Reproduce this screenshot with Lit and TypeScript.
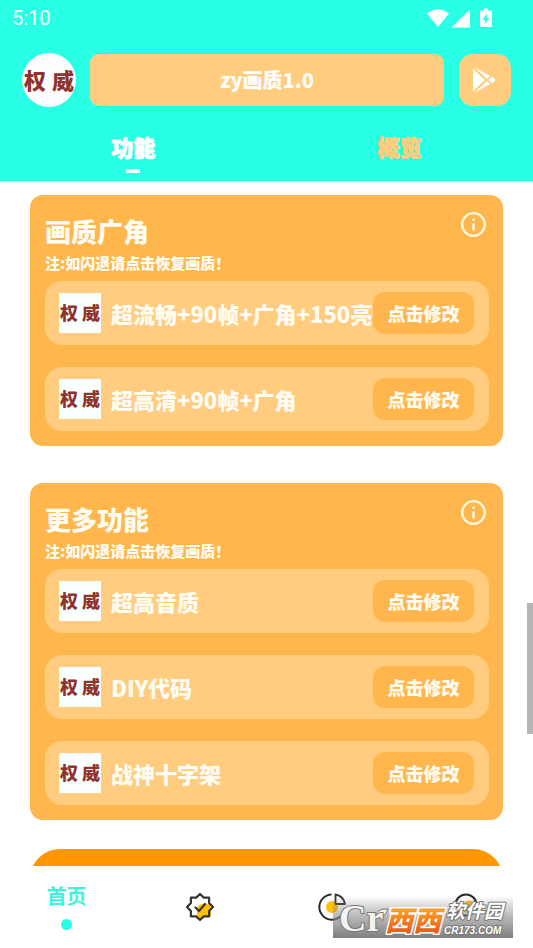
import { LitElement, html, css, svg } from "lit";
import { customElement, property } from "lit/decorators.js";

const FONT = css`"Noto Sans CJK SC", "Noto Sans", sans-serif`;

interface Section {
  title: string;
  items: string[];
}

const NOTE = "注:如闪退请点击恢复画质！";

const SECTIONS: Section[] = [
  { title: "画质广角", items: ["超流畅+90帧+广角+150亮", "超高清+90帧+广角"] },
  { title: "更多功能", items: ["超高音质", "DIY代码", "战神十字架"] },
];

@customElement("feature-card")
class FeatureCard extends LitElement {
  @property() heading = "";
  @property({ attribute: false }) items: string[] = [];

  static styles = css`
    :host {
      display: block;
      font-family: ${FONT};
      font-weight: 900;
      color: #fffdf4;
    }
    .card {
      background: #ffb74d;
      border-radius: 13px;
      padding: 15px 14px 15px 15px;
    }
    .head {
      display: flex;
      justify-content: space-between;
      align-items: flex-start;
      height: 71px;
    }
    .title {
      margin: 7px 0 0;
      font-size: 26px;
      line-height: 28px;
      font-weight: 900;
    }
    .note {
      margin: 7px 0 0;
      font-size: 15px;
      line-height: 22px;
      white-space: nowrap;
    }
    .info {
      border: 0;
      padding: 0;
      background: none;
      width: 30px;
      height: 30px;
      color: #fff9df;
      cursor: pointer;
    }
    .info svg {
      display: block;
    }
    .list {
      list-style: none;
      margin: 0;
      padding: 0;
      display: grid;
      gap: 22px;
    }
    .row {
      display: flex;
      align-items: center;
      height: 64px;
      box-sizing: border-box;
      padding: 0 15px 0 14px;
      border-radius: 17px;
      background: #ffcc80;
    }
    .thumb {
      flex: none;
      width: 42px;
      height: 40px;
      margin-right: 10px;
      background: #f9feff;
      color: #8f332c;
      font-size: 18px;
      line-height: 38px;
      font-weight: 900;
      display: flex;
      justify-content: space-between;
      padding: 0 1px;
      box-sizing: border-box;
    }
    .label {
      flex: 1;
      min-width: 0;
      overflow: hidden;
      white-space: nowrap;
      font-size: 22px;
      line-height: 34px;
    }
    .apply {
      flex: none;
      width: 101px;
      height: 42px;
      border: 0;
      padding: 0;
      border-radius: 12px;
      background: #ffb74d;
      color: inherit;
      font: inherit;
      font-size: 18px;
      cursor: pointer;
    }
  `;

  render() {
    return html`<section class="card">
      <div class="head">
        <div>
          <h2 class="title">${this.heading}</h2>
          <p class="note">${NOTE}</p>
        </div>
        <button class="info" aria-label="说明">
          <svg width="30" height="30" viewBox="0 0 30 30" fill="none" stroke="currentColor">
            <circle cx="14.500" cy="14.500" r="11.3" stroke-width="2.3" />
            <path d="M14.500 13.500v7M14.500 8.500v2.500" stroke-width="2.5" />
          </svg>
        </button>
      </div>
      <ul class="list">
        ${this.items.map(
          (item) => html`<li class="row">
            <span class="thumb"><span>权</span><span>威</span></span>
            <span class="label">${item}</span>
            <button class="apply">点击修改</button>
          </li>`
        )}
      </ul>
    </section>`;
  }
}

const badgeIcon = svg`
  <path d="M17 12h7.500q2 0 1.500 3v9l-8 0-3 3.500-3-2V18q0-5 5-6z" fill="#ffc107"/>
  <path d="M15 2l3.800 3.600h5.300v5.300L28 15l-3.900 4.100v5.300h-5.300L15 28l-3.800-3.600H5.900v-5.300L2 15l3.900-4.100V5.600h5.300z" fill="none" stroke="#37352f" stroke-width="2.2" stroke-linejoin="round"/>
  <path d="M10.500 15.500l3.500 3.500 6-7" fill="none" stroke="#37352f" stroke-width="2.2" stroke-linecap="round" stroke-linejoin="round"/>`;

const chartIcon = svg`
  <circle cx="14" cy="15" r="6" fill="#ffc107"/>
  <path d="M13.500 2.500A12.600 12.600 0 1 0 26.500 16" fill="none" stroke="#2b2b2b" stroke-width="2"/>
  <path d="M17.500 2.500V12H27A12 12 0 0 0 17.500 2.500z" fill="#fff" stroke="#37352f" stroke-width="1.800" stroke-linejoin="round"/>`;

const profileIcon = svg`
  <circle cx="15" cy="13" r="10.500" fill="none" stroke="#2b2b2b" stroke-width="2.200"/>
  <circle cx="18" cy="15" r="6.500" fill="#ffc107"/>`;

@customElement("app-root")
class AppRoot extends LitElement {
  static styles = css`
    :host {
      display: flex;
      flex-direction: column;
      position: relative;
      height: 100vh;
      overflow: hidden;
      background: #fff;
      font-family: ${FONT};
    }
    .header {
      flex: none;
      background: #28ffe5;
    }
    .status {
      display: flex;
      justify-content: space-between;
      align-items: center;
      height: 36px;
      padding: 0 40px 0 12px;
      color: #fff;
      font: 20px Roboto, sans-serif;
    }
    .status svg {
      display: block;
    }
    .bar {
      display: flex;
      align-items: center;
      height: 54px;
      margin-top: 17px;
      padding: 0 22px;
    }
    .avatar {
      flex: none;
      width: 54px;
      height: 54px;
      box-sizing: border-box;
      padding: 0 2px;
      border-radius: 50%;
      background: #fdfdff;
      color: #8f332c;
      font-size: 22px;
      line-height: 52px;
      font-weight: 900;
      display: flex;
      justify-content: space-between;
    }
    .name {
      flex: 1;
      margin: 0 15px 0 14px;
      border-radius: 9px;
      background: #ffcc80;
      color: #fff;
      text-align: center;
      font-size: 20px;
      line-height: 52px;
      font-weight: 900;
    }
    .play {
      flex: none;
      width: 52px;
      height: 52px;
      border: 0;
      padding: 0;
      border-radius: 14px;
      background: #ffcc80;
      cursor: pointer;
    }
    .play svg {
      display: block;
      margin: auto;
    }
    .tabs {
      display: flex;
      height: 74px;
    }
    .tab {
      flex: 1;
      border: 0;
      padding: 24px 0 0;
      background: none;
      color: #ffcc80;
      font: inherit;
      font-size: 22px;
      line-height: 30px;
      font-weight: 900;
      display: flex;
      flex-direction: column;
      align-items: center;
      gap: 8px;
      cursor: pointer;
      -webkit-text-stroke: 1px currentColor;
    }
    .tab.active {
      color: #fff;
    }
    .tab.active::after {
      content: "";
      width: 14px;
      height: 4px;
      border-radius: 1px;
      background: #fff;
    }
    .content {
      flex: 1;
      min-height: 0;
      overflow: hidden;
      padding: 14px 30px 0;
    }
    .content feature-card + feature-card {
      margin-top: 37px;
    }
    .banner {
      margin-top: 29px;
      height: 90px;
      border-radius: 30px;
      background: #ff9800;
    }
    .nav {
      flex: none;
      display: flex;
      height: 82px;
      background: #fff;
    }
    .nav a {
      flex: 1;
      display: flex;
      flex-direction: column;
      align-items: center;
      color: #28ffe5;
      text-decoration: none;
    }
    .home {
      padding-top: 15px;
      gap: 8px;
      font-size: 20px;
      line-height: 30px;
      font-weight: 700;
    }
    .home span {
      color: #3cf5df;
    }
    .home::after {
      content: "";
      width: 11px;
      height: 11px;
      border-radius: 50%;
      background: #28ffe5;
    }
    .icon {
      padding-top: 26px;
    }
    .scroll {
      position: absolute;
      right: 0;
      top: 603px;
      width: 6px;
      height: 131px;
      background: #b5b5b5;
    }
    .mark {
      position: absolute;
      right: 20px;
      bottom: 10px;
    }
    .mark text {
      paint-order: stroke;
      stroke-linejoin: round;
    }
    .cr {
      font: 700 38px "Liberation Serif", serif;
      fill: #f3f3f3;
      stroke: #777;
      stroke-width: 2px;
    }
    .xi {
      font: italic 900 28px "Noto Sans CJK SC", sans-serif;
      fill: url(#flame);
      stroke: #fff;
      stroke-width: 3px;
    }
    .park {
      font: italic 700 19px "Noto Sans CJK SC", sans-serif;
      fill: #fff;
      stroke: #777;
      stroke-width: 2px;
    }
    .site {
      font: italic 700 10px "Liberation Sans", sans-serif;
      fill: #fff;
      stroke: #777;
      stroke-width: 2px;
    }
  `;

  render() {
    return html`
      <header class="header">
        <div class="status">
          <span>5:10</span>
          <svg width="66" height="22" viewBox="0 0 66 22" fill="#fff">
            <path d="M0 6.500Q11-2 22 6.500L11 20z" />
            <path d="M43 2.500V20.500H24.500z" />
            <path fill-rule="evenodd" d="M57 1.500h4v2h3q1 0 1 1.500V18.500q0 1.500-1.500 1.500H54.500Q53 20 53 18.500V5Q53 3.500 54 3.500H57zM60 6.500l-4.500 6.500h2.800L57.500 17.500l5-6.500h-2.800z" />
          </svg>
        </div>
        <div class="bar">
          <span class="avatar"><span>权</span><span>威</span></span>
          <div class="name">zy画质1.0</div>
          <button class="play" aria-label="应用商店">
            <svg width="26" height="28" viewBox="0 0 26 28" fill="#fff">
              <path d="M1 2.500V25.500L12.500 14z" />
              <path d="M3 1.500L18 10l-3.200 3zM3 26.500L18 18l-3.200-3z" />
              <path d="M16 14l3.500-3 3.500 2q1 1 0 2l-3.500 2z" />
            </svg>
          </button>
        </div>
        <nav class="tabs">
          <button class="tab active">功能</button>
          <button class="tab">概览</button>
        </nav>
      </header>
      <main class="content">
        ${SECTIONS.map(
          (s) => html`<feature-card .heading=${s.title} .items=${s.items}></feature-card>`
        )}
        <div class="banner"></div>
      </main>
      <nav class="nav">
        <a class="home" href="#home"><span>首页</span></a>
        <a class="icon" href="#verified" aria-label="认证">
          <svg width="30" height="30" viewBox="0 0 30 30">${badgeIcon}</svg>
        </a>
        <a class="icon" href="#stats" aria-label="统计">
          <svg width="30" height="30" viewBox="0 0 30 30">${chartIcon}</svg>
        </a>
        <a class="icon" href="#profile" aria-label="我的">
          <svg width="30" height="30" viewBox="0 0 30 30">${profileIcon}</svg>
        </a>
      </nav>
      <div class="scroll"></div>
      <svg class="mark" width="180" height="42" viewBox="0 0 180 42">
        <defs>
          <linearGradient id="shade" x2="0" y2="1">
            <stop offset="0" stop-color="#777" stop-opacity="0" />
            <stop offset="0.5" stop-color="#888" stop-opacity="0.6" />
            <stop offset="1" stop-color="#777" stop-opacity="0.95" />
          </linearGradient>
          <linearGradient id="flame" x2="0" y2="1">
            <stop offset="0.2" stop-color="#ffa726" />
            <stop offset="1" stop-color="#e04a16" />
          </linearGradient>
        </defs>
        <rect width="180" height="42" fill="url(#shade)" />
        <path d="M42 21q2-9 13-8q-3 10-13 8z" fill="#f3f3f3" stroke="#777" />
        <text class="cr" x="6" y="35">Cr</text>
        <text class="xi" x="52" y="35">西西</text>
        <text class="park" x="113" y="22">软件园</text>
        <text class="site" x="111" y="38">CR173.COM</text>
      </svg>
    `;
  }
}
